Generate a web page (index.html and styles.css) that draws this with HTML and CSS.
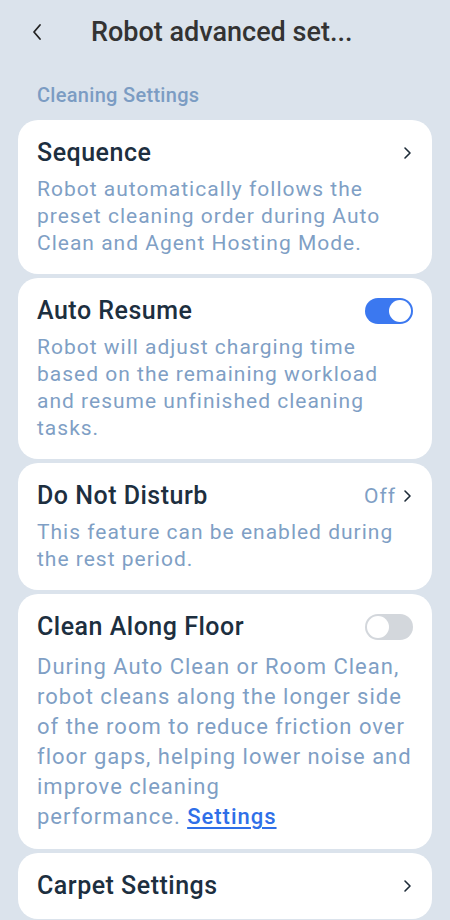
FILE: index.html
```html
<!DOCTYPE html>
<html>

<head>
    <title>Robot advanced settings</title>
    <link rel="stylesheet" href="styles.css">
</head>

<body>
    <header class="topbar">
        <svg class="back" width="12" height="20" viewBox="0 0 12 20">
            <path d="M9 3 L3 10 L9 17" fill="none" stroke="#222" stroke-width="1.8" stroke-linecap="round" stroke-linejoin="round"/>
        </svg>
        <h1>Robot advanced set...</h1>
    </header>

    <h2 class="section">Cleaning Settings</h2>

    <div class="list">
        <div class="card">
            <div class="row">
                <span class="title">Sequence</span>
                <svg class="chev" width="10" height="14" viewBox="0 0 10 14">
                    <path d="M3 2 L8 7 L3 12" fill="none" stroke="#1d2b38" stroke-width="1.6" stroke-linecap="round" stroke-linejoin="round"/>
                </svg>
            </div>
            <p class="desc">Robot automatically follows the preset cleaning order during Auto Clean and Agent Hosting Mode.</p>
        </div>

        <div class="card">
            <div class="row">
                <span class="title">Auto Resume</span>
                <span class="switch on"><span class="knob"></span></span>
            </div>
            <p class="desc">Robot will adjust charging time based on the remaining workload and resume unfinished cleaning tasks.</p>
        </div>

        <div class="card">
            <div class="row">
                <span class="title">Do Not Disturb</span>
                <span class="value">Off
                    <svg class="chev" width="10" height="14" viewBox="0 0 10 14">
                        <path d="M3 2 L8 7 L3 12" fill="none" stroke="#1d2b38" stroke-width="1.6" stroke-linecap="round" stroke-linejoin="round"/>
                    </svg>
                </span>
            </div>
            <p class="desc">This feature can be enabled during the rest period.</p>
        </div>

        <div class="card">
            <div class="row">
                <span class="title">Clean Along Floor</span>
                <span class="switch"><span class="knob"></span></span>
            </div>
            <p class="desc long">During Auto Clean or Room Clean, robot cleans along the longer side of the room to reduce friction over floor gaps, helping lower noise and improve cleaning <span class="keep">performance. <a href="#">Settings</a></span></p>
        </div>

        <div class="card">
            <div class="row">
                <span class="title">Carpet Settings</span>
                <svg class="chev" width="10" height="14" viewBox="0 0 10 14">
                    <path d="M3 2 L8 7 L3 12" fill="none" stroke="#1d2b38" stroke-width="1.6" stroke-linecap="round" stroke-linejoin="round"/>
                </svg>
            </div>
        </div>
    </div>
</body>

</html>
```

FILE: styles.css
```css
body {
    font-family: 'Roboto', 'Noto Sans', sans-serif;
    margin: 0;
    padding: 0;
    background-color: #dbe3ec;
    width: 450px;
    height: 920px;
    overflow: hidden;
}

.topbar {
    height: 64px;
    display: flex;
    align-items: center;
    padding: 0 0 0 31px;
}

.topbar h1 {
    margin: 0 0 0 48px;
    font-size: 27px;
    font-weight: 500;
    color: #333;
}

.back {
    display: block;
}

.section {
    margin: 0;
    padding: 18px 37px 0;
    height: 38px;
    font-size: 20px;
    font-weight: 500;
    letter-spacing: 0.3px;
    color: #7b9cc3;
    line-height: 26px;
}

.list {
    display: flex;
    flex-direction: column;
    gap: 4px;
    padding: 0 18px;
}

.card {
    background-color: #fff;
    border-radius: 20px;
    padding: 16px 19px 17px;
}

.row {
    display: flex;
    justify-content: space-between;
    align-items: center;
    height: 33px;
}

.title {
    font-size: 25px;
    font-weight: 500;
    letter-spacing: 0.5px;
    color: #1d2f3f;
}

.chev {
    display: block;
    margin-right: 1px;
}

.value {
    display: flex;
    align-items: center;
    gap: 6px;
    font-size: 21px;
    letter-spacing: 1px;
    color: #7f9fc5;
}

.desc {
    margin: 7px 0 0;
    font-size: 21px;
    letter-spacing: 1px;
    line-height: 27px;
    color: #7f9fc5;
}

.desc.long {
    margin-top: 9px;
    font-size: 22px;
    line-height: 30px;
}

.keep {
    white-space: nowrap;
}

.desc a {
    color: #2f6fe8;
    font-weight: 500;
    text-decoration: underline;
    text-underline-offset: 3px;
}

.switch {
    width: 48px;
    height: 26px;
    border-radius: 13px;
    background-color: #d3d7dc;
    display: flex;
    align-items: center;
    padding: 2px;
    box-sizing: border-box;
}

.switch .knob {
    width: 22px;
    height: 22px;
    border-radius: 50%;
    background-color: #fff;
}

.switch.on {
    background-color: #3b78f0;
    justify-content: flex-end;
}
```
